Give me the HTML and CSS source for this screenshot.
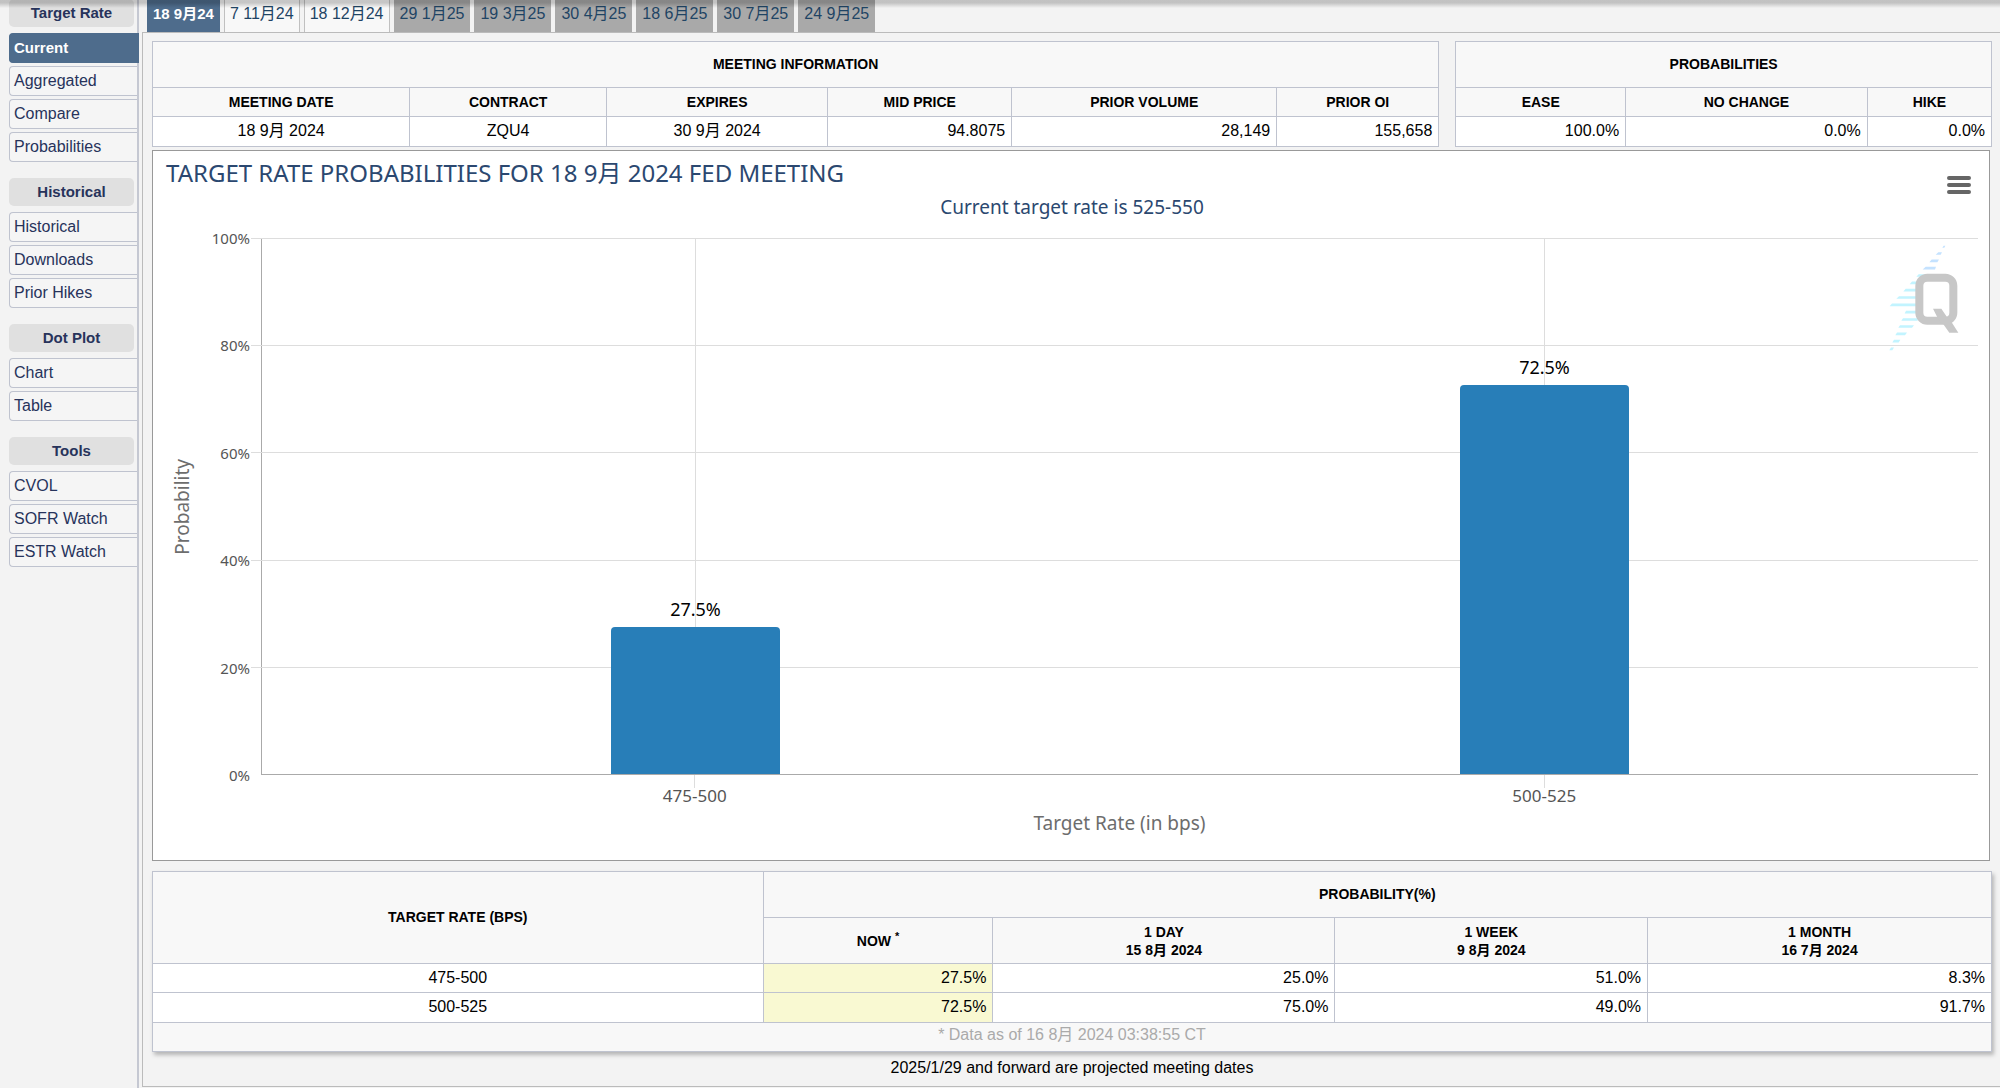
FILE: index.html
```html
<!DOCTYPE html>
<html lang="zh-Hant">
<head>
<meta charset="utf-8">
<title>Target Rate Probabilities</title>
<link rel="stylesheet" href="styles.css">
</head>
<body>
<div class="top-shadow"></div>
<div class="page">
  <nav class="sidebar">
    <section class="group">
      <h2 class="group-title">Target Rate</h2>
      <a class="item active" href="#current">Current</a>
      <a class="item" href="#aggregated">Aggregated</a>
      <a class="item" href="#compare">Compare</a>
      <a class="item" href="#probabilities">Probabilities</a>
    </section>
    <section class="group">
      <h2 class="group-title">Historical</h2>
      <a class="item" href="#historical">Historical</a>
      <a class="item" href="#downloads">Downloads</a>
      <a class="item" href="#hikes">Prior Hikes</a>
    </section>
    <section class="group">
      <h2 class="group-title">Dot Plot</h2>
      <a class="item" href="#chart">Chart</a>
      <a class="item" href="#table">Table</a>
    </section>
    <section class="group">
      <h2 class="group-title">Tools</h2>
      <a class="item" href="#cvol">CVOL</a>
      <a class="item" href="#sofr">SOFR Watch</a>
      <a class="item" href="#estr">ESTR Watch</a>
    </section>
  </nav>

  <main class="main">
    <nav class="tabs">
      <a class="tab active" href="#m1">18 9月24</a>
      <a class="tab" href="#m2">7 11月24</a>
      <a class="tab" href="#m3">18 12月24</a>
      <a class="tab projected" href="#m4">29 1月25</a>
      <a class="tab projected" href="#m5">19 3月25</a>
      <a class="tab projected" href="#m6">30 4月25</a>
      <a class="tab projected" href="#m7">18 6月25</a>
      <a class="tab projected" href="#m8">30 7月25</a>
      <a class="tab projected" href="#m9">24 9月25</a>
    </nav>

    <div class="panel">
      <div class="info">
        <table class="data meeting">
          <colgroup><col class="col-date"><col class="col-contract"><col class="col-expires"><col class="col-price"><col class="col-volume"><col></colgroup>
          <thead>
            <tr class="caption-row"><th colspan="6">MEETING INFORMATION</th></tr>
            <tr><th>MEETING DATE</th><th>CONTRACT</th><th>EXPIRES</th><th>MID PRICE</th><th>PRIOR VOLUME</th><th>PRIOR OI</th></tr>
          </thead>
          <tbody>
            <tr class="tall"><td>18 9月 2024</td><td>ZQU4</td><td>30 9月 2024</td><td class="num">94.8075</td><td class="num">28,149</td><td class="num">155,658</td></tr>
          </tbody>
        </table>
        <table class="data odds">
          <colgroup><col class="col-ease"><col class="col-same"><col></colgroup>
          <thead>
            <tr class="caption-row"><th colspan="3">PROBABILITIES</th></tr>
            <tr><th>EASE</th><th>NO CHANGE</th><th>HIKE</th></tr>
          </thead>
          <tbody>
            <tr class="tall"><td class="num">100.0%</td><td class="num">0.0%</td><td class="num">0.0%</td></tr>
          </tbody>
        </table>
      </div>

      <section class="chart">
        <h1 class="chart-title">TARGET RATE PROBABILITIES FOR 18 9月 2024 FED MEETING</h1>
        <p class="chart-subtitle">Current target rate is 525-550</p>
        <button class="menu" aria-label="Chart menu">
          <svg width="24" height="20" viewBox="0 0 24 20"><path d="M2 3H22M2 10H22M2 17H22" stroke="#666" stroke-width="4" stroke-linecap="round"/></svg>
        </button>
        <div class="figure">
          <div class="y-title"><span>Probability</span></div>
          <div class="y-labels"><span>100%</span><span>80%</span><span>60%</span><span>40%</span><span>20%</span><span>0%</span></div>
          <div class="plot">
            <div class="gridlines"><i></i><i></i><i></i><i></i><i></i></div>
            <svg class="logo" viewBox="85 280 210 320">
              <g fill="#c4e2ff">
                <path d="M249 285h5l-3 6h-6zM233 304h11l-4 8h-15zM213 326h22l-5 8h-24zM195 348h31l-3 8h-37z"/>
              </g>
              <g fill="#c2f4ff">
                <path d="M174 370h30l-4 8h-33zM154 392h18v8h-25zM135 414h36v8h-43zM115 436h54v8h-62zM94 458h74v8h-81zM136 480h30v8h-34zM127 502h44v8h-49zM118 523h42l-6 8h-41zM109 545h30l-6 8h-29zM100 567h19l-5 8h-19zM91 590h9l-5 8h-9z"/>
              </g>
              <rect x="176" y="381" width="102" height="129" rx="24" fill="none" stroke="#c7c7c7" stroke-width="24"/>
              <path d="M217 474h25l20 29 10 10 21 33h-27l-19-27-11-8z" fill="#c7c7c7"/>
            </svg>
            <div class="bars">
              <div class="category"><div class="bar" style="height:27.5%"><span class="value">27.5%</span></div></div>
              <div class="category"><div class="bar" style="height:72.5%"><span class="value">72.5%</span></div></div>
            </div>
          </div>
          <div class="x-labels"><span>475-500</span><span>500-525</span></div>
          <div class="x-title">Target Rate (in bps)</div>
        </div>
      </section>

      <table class="data history">
        <colgroup><col class="col-rate"><col class="col-now"><col class="col-day"><col class="col-week"><col></colgroup>
        <thead>
          <tr class="caption-row"><th rowspan="2">TARGET RATE (BPS)</th><th colspan="4">PROBABILITY(%)</th></tr>
          <tr class="period-row"><th>NOW <sup>*</sup></th><th>1 DAY<br>15 8月 2024</th><th>1 WEEK<br>9 8月 2024</th><th>1 MONTH<br>16 7月 2024</th></tr>
        </thead>
        <tbody>
          <tr><td>475-500</td><td class="num now">27.5%</td><td class="num">25.0%</td><td class="num">51.0%</td><td class="num">8.3%</td></tr>
          <tr class="tall"><td>500-525</td><td class="num now">72.5%</td><td class="num">75.0%</td><td class="num">49.0%</td><td class="num">91.7%</td></tr>
        </tbody>
        <tfoot>
          <tr><td colspan="5">* Data as of 16 8月 2024 03:38:55 CT</td></tr>
        </tfoot>
      </table>
      <p class="note">2025/1/29 and forward are projected meeting dates</p>
    </div>
  </main>
</div>
</body>
</html>
```
FILE: styles.css
```css
* { box-sizing: border-box; }

body {
  margin: 0;
  background: #f3f3f3;
  color: #000;
  font: 16px/20px "Liberation Sans", "Noto Sans CJK JP", sans-serif;
}

a { color: inherit; text-decoration: none; }

.top-shadow {
  position: absolute;
  inset: 0 0 auto;
  height: 8px;
  background: linear-gradient(rgba(0, 0, 0, .2) 35%, rgba(0, 0, 0, 0));
}

.page { display: flex; min-height: 100vh; }

/* Sidebar */
.sidebar {
  flex: 0 0 139px;
  display: flex;
  flex-direction: column;
  gap: 16px;
  margin-top: -1px;
  padding-left: 9px;
  border-right: 2px solid #c5c8d2;
  color: #27335b;
}
.group { display: flex; flex-direction: column; gap: 3px; }
.group-title {
  margin: 0 3px 3px 0;
  border-radius: 5px;
  background: #e0e0e0;
  font-size: 15px;
  line-height: 28px;
  text-align: center;
}
.item {
  height: 30px;
  padding-left: 4px;
  border: 1px solid #bfc3cf;
  border-right: 0;
  border-radius: 4px 0 0 4px;
  background: #f5f5f5;
  line-height: 28px;
}
.item.active {
  margin-right: -2px;
  border-color: #4e6c8c;
  background: #4e6c8c;
  color: #fff;
  font-size: 15px;
  font-weight: bold;
}

/* Meeting tabs */
.main { flex: 1; min-width: 0; padding-left: 3px; }
.tabs { display: flex; gap: 4px; height: 32px; padding-left: 5px; }
.tab {
  padding: 0 5px;
  border: solid #c0c0c0;
  border-width: 0 1px;
  background: #f8f8f8;
  color: #1f4464;
  line-height: 28px;
  white-space: nowrap;
}
.tab.active {
  border-color: #4e6c8c;
  background: #4e6c8c;
  color: #fff;
  font-size: 15px;
  font-weight: bold;
}
.tab.projected { border-color: #a9a9a9; background: #a9a9a9; }

.panel {
  padding: 8px 8px 8px 9px;
  border: solid #bbb;
  border-width: 1px 0 1px 1px;
}

/* Tables */
.data {
  width: 100%;
  border-collapse: collapse;
  table-layout: fixed;
  background: #fff;
  text-align: center;
}
.data th, .data td { height: 29px; padding: 0 6px; border: 1px solid #bfc3cf; }
.data th { background: #f8f8f8; font-size: 14px; line-height: 18px; }
.data .caption-row th { height: 46px; padding-bottom: 1px; }
.data .tall td { height: 30px; padding-bottom: 2px; }
.data .num { text-align: right; }
.data .now { background: #f9f9d2; }

.info { display: flex; gap: 16px; }
.meeting { flex: 1287 1 0; }
.odds { flex: 536 1 0; }
.col-date { width: 20%; }
.col-contract { width: 15.3%; }
.col-expires { width: 17.2%; }
.col-price { width: 14.3%; }
.col-volume { width: 20.6%; }
.col-ease { width: 31.7%; }
.col-same { width: 45.1%; }

.history { margin-top: 10px; box-shadow: 2px 3px 4px rgba(0, 0, 0, .25); }
.history .period-row th { height: 46px; }
.history sup { font-size: 11px; line-height: 0; }
.history tfoot td { background: #f8f8f8; color: #aaa; padding-bottom: 4px; }
.col-rate { width: 33.2%; }
.col-now { width: 12.5%; }
.col-day { width: 18.6%; }
.col-week { width: 17%; }

.note { margin: 6px 0 0; text-align: center; }

/* Chart */
.chart {
  position: relative;
  margin: 3px 2px 0 0;
  padding: 7px 11px 25px 13px;
  border: 1px solid #999;
  background: #fff;
  font-family: "Noto Sans", "Noto Sans CJK JP", sans-serif;
}
.chart-title { margin: 0; color: #2b4870; font-size: 24px; font-weight: 400; line-height: 30px; }
.chart-subtitle { margin: 7px 0 0; color: #2b4870; font-size: 19px; line-height: 24px; text-align: center; }
.menu {
  position: absolute;
  top: 24px;
  right: 18px;
  padding: 0;
  border: 0;
  background: none;
  line-height: 0;
  cursor: pointer;
}
.figure {
  display: grid;
  grid-template-columns: 32px 51px 1fr;
  grid-template-rows: 537px 36px auto;
  column-gap: 6px;
  margin-top: 19px;
}
.y-title {
  display: flex;
  align-items: center;
  justify-content: center;
  color: #6d6d6d;
  font-size: 19px;
}
.y-title span { writing-mode: vertical-rl; transform: rotate(180deg); }
.y-labels {
  display: flex;
  flex-direction: column;
  justify-content: space-between;
  margin: -10px 5px -10px 0;
  color: #555;
  font-size: 15px;
  text-align: right;
}
.plot {
  position: relative;
  display: grid;
  border-left: 1px solid #aaa;
  border-bottom: 1px solid #aaa;
}
.gridlines, .bars { grid-area: 1 / 1; }
.gridlines { display: grid; grid-template-rows: repeat(5, 1fr); margin-left: -11px; }
.gridlines i { border-top: 1px solid #ddd; }
.logo { position: absolute; top: 6px; right: 19px; width: 70px; height: 107px; }
.bars { position: relative; display: flex; padding: 0 9px; }
.category {
  flex: 1;
  display: flex;
  align-items: flex-end;
  justify-content: center;
  background: linear-gradient(#ddd, #ddd) center / 1px 100% no-repeat;
}
.bar {
  width: 20%;
  border-radius: 4px 4px 0 0;
  background: #287eb8;
  text-align: center;
}
.value {
  display: block;
  margin-top: -30px;
  color: #000;
  font-size: 18px;
  line-height: 24px;
  text-shadow: 0 0 2px #fff, 0 0 2px #fff;
}
.x-labels { grid-column: 3; display: flex; padding: 0 9px; color: #555; font-size: 17px; text-align: center; }
.x-labels span {
  flex: 1;
  padding-top: 11px;
  background: linear-gradient(#ddd, #ddd) top / 1px 13px no-repeat;
}
.x-title { grid-column: 3; color: #6d6d6d; font-size: 19px; line-height: 24px; text-align: center; }
```
